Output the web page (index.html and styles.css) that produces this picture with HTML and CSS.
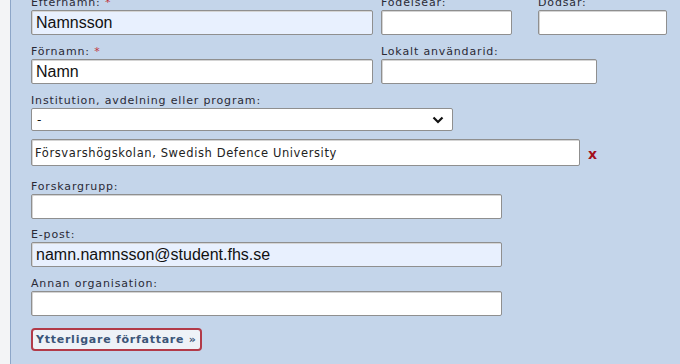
FILE: index.html
```html
<!DOCTYPE html>
<html lang="sv">
<head>
<meta charset="utf-8">
<title>Författare</title>
<link rel="stylesheet" href="styles.css">
</head>
<body>
<div class="page">
  <div class="strip"></div>
  <form class="panel">
    <div class="row row-first">
      <div class="field">
        <label class="lbl">Efternamn: <span class="req">*</span></label>
        <input class="inp inp-auto w-name" type="text" value="Namnsson">
      </div>
      <div class="field f-birth">
        <label class="lbl">Födelseår:</label>
        <input class="inp w-year" type="text">
      </div>
      <div class="field f-death">
        <label class="lbl">Dödsår:</label>
        <input class="inp w-year2" type="text">
      </div>
    </div>
    <div class="row row-second">
      <div class="field">
        <label class="lbl">Förnamn: <span class="req">*</span></label>
        <input class="inp w-name" type="text" value="Namn">
      </div>
      <div class="field f-birth">
        <label class="lbl">Lokalt användarid:</label>
        <input class="inp w-local" type="text">
      </div>
    </div>
    <div class="field f-inst">
      <label class="lbl">Institution, avdelning eller program:</label>
      <div class="select">
        <span class="sel-val">-</span>
        <svg class="chev" width="12" height="8" viewBox="0 0 12 8"><path d="M1.5 1.5 L6 6 L10.5 1.5" fill="none" stroke="#111" stroke-width="2.2"/></svg>
      </div>
    </div>
    <div class="org-row">
      <input class="inp inp-org" type="text" value="Försvarshögskolan, Swedish Defence University">
      <span class="remove">x</span>
    </div>
    <div class="field f-group">
      <label class="lbl">Forskargrupp:</label>
      <input class="inp w-wide" type="text">
    </div>
    <div class="field f-mail">
      <label class="lbl">E-post:</label>
      <input class="inp inp-auto w-wide" type="text" value="namn.namnsson@student.fhs.se">
    </div>
    <div class="field f-other">
      <label class="lbl">Annan organisation:</label>
      <input class="inp w-wide" type="text">
    </div>
    <button class="more" type="button">Ytterligare författare »</button>
  </form>
</div>
</body>
</html>
```

FILE: styles.css
```css
html, body {
  margin: 0;
  padding: 0;
  background: #c4d5ea;
  overflow: hidden;
}
.page {
  display: flex;
  height: 364px;
}
.strip {
  width: 10px;
  flex: none;
  background: #f3f4f6;
  border-right: 1px solid #8da6c8;
}
.panel {
  flex: 1;
  padding-left: 20px;
  margin-top: -4px;
  font-family: "DejaVu Sans", Verdana, sans-serif;
}
.row {
  display: flex;
}
.row-second {
  margin-top: 10px;
}
.field {
  display: flex;
  flex-direction: column;
  align-items: flex-start;
}
.f-birth {
  margin-left: 8px;
}
.f-death {
  margin-left: 26px;
}
.lbl {
  font-size: 11px;
  line-height: 13px;
  height: 13px;
  margin-bottom: 1px;
  color: #2a2a36;
  letter-spacing: 0.85px;
  white-space: nowrap;
}
.req {
  color: #c0343c;
}
.inp {
  box-sizing: border-box;
  height: 25px;
  margin: 0;
  border: 1px solid #8f8f8f;
  border-radius: 2px;
  background: #fff;
  box-shadow: inset 1px 1px 0 #d4d4d4;
  font-family: "Liberation Sans", Arial, sans-serif;
  font-size: 16px;
  color: #111;
  padding: 0 4px;
  outline: none;
}
.inp-auto {
  background: #e8f0fe;
}
.w-name { width: 342px; }
.w-year { width: 131px; }
.w-year2 { width: 129px; }
.w-local { width: 216px; }
.w-wide { width: 471px; }
.f-inst {
  margin-top: 10px;
}
.select {
  box-sizing: border-box;
  width: 422px;
  height: 23px;
  border: 1px solid #8f8f8f;
  border-radius: 2px;
  background: #fff;
  display: flex;
  align-items: center;
  justify-content: space-between;
  padding: 0 8px 0 5px;
  font-size: 12px;
  color: #111;
}
.chev {
  display: block;
}
.org-row {
  display: flex;
  align-items: center;
  margin-top: 8px;
}
.inp-org {
  width: 549px;
  height: 27px;
  font-family: "DejaVu Sans", Verdana, sans-serif;
  font-size: 11.5px;
  letter-spacing: 0.6px;
  color: #222;
  padding-left: 3px;
}
.remove {
  margin-left: 8px;
  color: #a3101c;
  font-weight: bold;
  font-size: 14px;
  line-height: 14px;
  margin-top: 2px;
}
.f-group {
  margin-top: 14px;
}
.f-mail {
  margin-top: 9px;
}
.f-other {
  margin-top: 10px;
}
.more {
  display: block;
  box-sizing: border-box;
  margin-top: 12px;
  height: 23px;
  width: 171px;
  padding: 0 0 0 3px;
  text-align: left;
  border: 2px solid #b23a48;
  border-radius: 4px;
  background: #eef2f7;
  font-family: "DejaVu Sans", Verdana, sans-serif;
  font-weight: bold;
  font-size: 11px;
  color: #3b5578;
  letter-spacing: 0.75px;
  white-space: nowrap;
}
```
